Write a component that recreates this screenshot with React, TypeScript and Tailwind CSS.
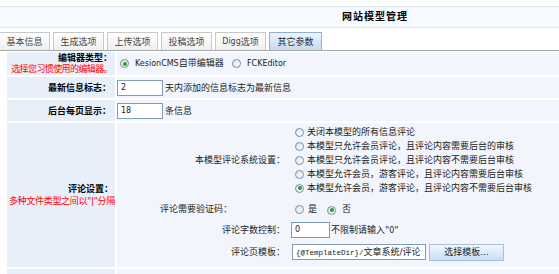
import React from 'react';

// Model management form: title bar, tab strip and a two-column settings table.
const tabs = ['基本信息', '生成选项', '上传选项', '投稿选项', 'Digg选项', '其它参数'];

const commentModes = [
  '关闭本模型的所有信息评论',
  '本模型只允许会员评论，且评论内容需要后台的审核',
  '本模型只允许会员评论，且评论内容不需要后台审核',
  '本模型允许会员，游客评论，且评论内容需要后台审核',
  '本模型允许会员，游客评论，且评论内容不需要后台审核',
];

function Radio({ checked = false }: { checked?: boolean }) {
  return (
    <span className="inline-flex w-[9px] h-[9px] shrink-0 rounded-full border border-[#6f8bb0] bg-gradient-to-br from-[#dfe3e8] to-white items-center justify-center">
      {checked && <span className="w-[4px] h-[4px] rounded-full bg-[#1fa51f]" />}
    </span>
  );
}

function Latin({ children }: { children: React.ReactNode }) {
  return <span className="text-[8px]">{children}</span>;
}

function Box({ value, width }: { value: React.ReactNode; width: string }) {
  return (
    <div className={`${width} h-[16px] border border-[#7f9db9] bg-white flex items-center pl-[3px] overflow-hidden whitespace-nowrap`}>
      {value}
    </div>
  );
}

export default function App() {
  return (
    <div className="w-[559px] h-[274px] overflow-hidden bg-white text-[9px] leading-[12px] text-[#222] font-['DejaVu_Sans','Noto_Sans_CJK_SC',sans-serif]">
      {/* title bar */}
      <div className="mt-[6px] h-[22px] bg-[#f6f9fd] border-y border-[#dce6f1] flex items-center">
        <span className="pl-[342px] font-bold text-[10px] tracking-[1px] text-black">网站模型管理</span>
      </div>

      {/* tabs */}
      <div className="mt-[4px] -ml-[1px] flex gap-[3px] border-b border-[#a8a8a8]">
        {tabs.map((t, i) => {
          const active = i === tabs.length - 1;
          return (
            <div
              key={t}
              className={
                active
                  ? 'w-[53px] h-[18px] border border-b-0 border-[#93b0d2] bg-gradient-to-b from-[#eef4fb] to-[#c6daef] flex items-center justify-center text-[#1f2a38]'
                  : 'w-[51px] h-[18px] border border-b-0 border-[#c8c8c8] bg-gradient-to-b from-white to-[#efefef] flex items-center justify-center text-[#444]'
              }
            >
              {t.startsWith('Digg') ? (
                <>
                  <Latin>Digg</Latin>选项
                </>
              ) : (
                t
              )}
            </div>
          );
        })}
      </div>

      {/* form table */}
      <div className="mt-[1px] pl-[7px] flex flex-col gap-[2px]">
        <div className="flex gap-[2px] h-[23px]">
          <div className="w-[108px] bg-[#e7effa] flex flex-col items-end justify-center pr-[3px] leading-[11px] whitespace-nowrap">
            <span className="font-bold text-black">编辑器类型：</span>
            <span className="text-[#ff0000] tracking-[-0.6px]">选择您习惯使用的编辑器。</span>
          </div>
          <div className="flex-1 bg-[#f2f6fc] flex items-center pl-[3px]">
            <div className="w-[112px] flex items-center gap-[6px]">
              <Radio checked />
              <span>
                <Latin>KesionCMS</Latin>自带编辑器
              </span>
            </div>
            <div className="flex items-center gap-[6px]">
              <Radio />
              <Latin>FCKEditor</Latin>
            </div>
          </div>
        </div>

        <div className="flex gap-[2px] h-[21px]">
          <div className="w-[108px] bg-[#e7effa] flex items-center justify-end pr-[4px] font-bold text-black">最新信息标志：</div>
          <div className="flex-1 bg-[#f2f6fc] flex items-center">
            <Box width="w-[46px]" value={<Latin>2</Latin>} />
            <span className="ml-[2px]">天内添加的信息标志为最新信息</span>
          </div>
        </div>

        <div className="flex gap-[2px] h-[21px]">
          <div className="w-[108px] bg-[#e7effa] flex items-center justify-end pr-[4px] font-bold text-black">后台每页显示：</div>
          <div className="flex-1 bg-[#f2f6fc] flex items-center">
            <Box width="w-[46px]" value={<Latin>18</Latin>} />
            <span className="ml-[2px]">条信息</span>
          </div>
        </div>

        <div className="flex gap-[2px] h-[144px]">
          <div className="w-[108px] bg-[#e7effa] flex flex-col items-end justify-center whitespace-nowrap">
            <span className="font-bold text-black pr-[2px]">评论设置：</span>
            <span className="text-[#ff0000] tracking-[-0.3px]">多种文件类型之间以"|"分隔</span>
          </div>
          <div className="flex-1 bg-[#f2f6fc] flex flex-col pt-[1px]">
            <div className="flex h-[72px]">
              <div className="w-[170px] flex items-center justify-end pr-[2px]">本模型评论系统设置：</div>
              <div className="pl-[8px] flex flex-col justify-center">
                {commentModes.map((m, i) => (
                  <div key={m} className="h-[14px] flex items-center gap-[3px] whitespace-nowrap">
                    <Radio checked={i === commentModes.length - 1} />
                    <span>{m}</span>
                  </div>
                ))}
              </div>
            </div>

            <div className="flex h-[26px]">
              <div className="w-[170px] flex items-center justify-end pr-[55px]">评论需要验证码：</div>
              <div className="pl-[8px] flex items-center">
                <Radio />
                <span className="ml-[4px]">是</span>
                <span className="ml-[10px]">
                  <Radio checked />
                </span>
                <span className="ml-[6px]">否</span>
              </div>
            </div>

            <div className="flex h-[16px]">
              <div className="w-[170px] flex items-center justify-end pr-[2px]">评论字数控制：</div>
              <div className="pl-[4px] flex items-center">
                <Box width="w-[39px]" value={<Latin>0</Latin>} />
                <span className="ml-[1px]">不限制请输入"<Latin>0</Latin>"</span>
              </div>
            </div>

            <div className="flex h-[18px] mt-[5px]">
              <div className="w-[170px] flex items-center justify-end pr-[2px]">评论页模板：</div>
              <div className="pl-[5px] flex items-center">
                <Box
                  width="w-[134px]"
                  value={
                    <span className="text-[#222]">
                      <span className="text-[7.5px] font-['Liberation_Mono',monospace]">{'{@TemplateDir}'}/</span>
                      文章系统/评论
                    </span>
                  }
                />
                <button className="ml-[3px] w-[75px] h-[17px] border border-[#a7c0dc] bg-gradient-to-b from-[#f1f7fd] to-[#c9def4] text-[9px] text-[#222] flex items-center justify-center">
                  选择模板...
                </button>
              </div>
            </div>
          </div>
        </div>

        <div className="flex gap-[2px] h-[20px]">
          <div className="w-[108px] bg-[#e7effa]" />
          <div className="flex-1 bg-[#f2f6fc]" />
        </div>
      </div>
    </div>
  );
}
